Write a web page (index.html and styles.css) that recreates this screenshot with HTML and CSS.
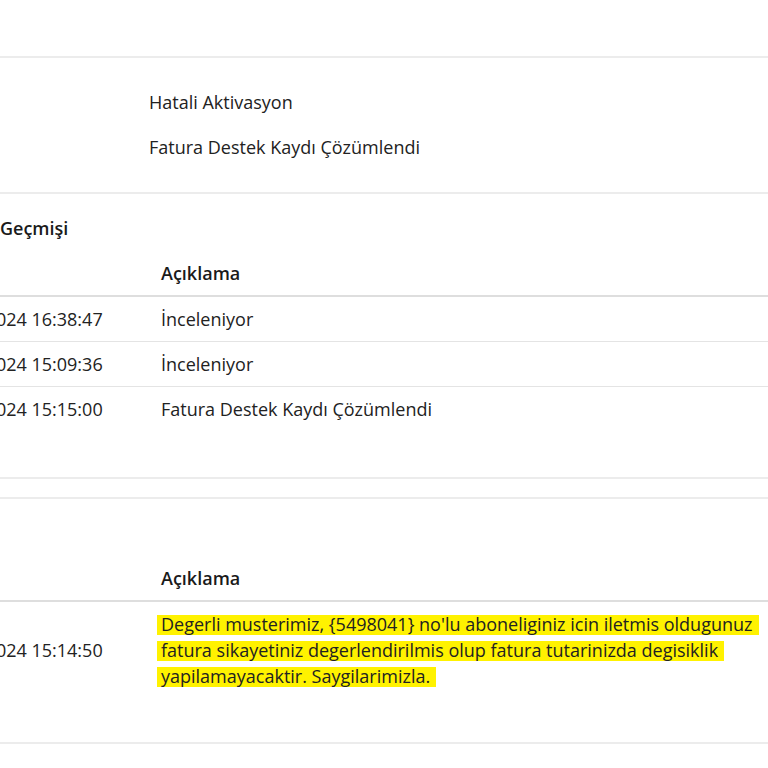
FILE: index.html
```html
<!DOCTYPE html>
<html lang="tr">
<head>
    <meta charset="UTF-8">
    <meta name="viewport" content="width=device-width, initial-scale=1.0">
    <title>Başvuru Detayı</title>
    <link rel="stylesheet" href="styles.css">
</head>
<body>

    <div class="page">
        <div class="panel">
            <div class="section info">
                <div class="info-row">
                    <span class="info-label">Konu</span>
                    <span class="info-value">Hatali Aktivasyon</span>
                </div>
                <div class="info-row">
                    <span class="info-label">Durum</span>
                    <span class="info-value">Fatura Destek Kaydı Çözümlendi</span>
                </div>
            </div>

            <div class="section history">
                <h2>Başvuru Geçmişi</h2>
                <table class="grid">
                    <colgroup><col class="col-date"><col></colgroup>
                    <thead>
                        <tr><th>Tarih</th><th>Açıklama</th></tr>
                    </thead>
                    <tbody>
                        <tr><td>12.03.2024 16:38:47</td><td>İnceleniyor</td></tr>
                        <tr><td>13.03.2024 15:09:36</td><td>İnceleniyor</td></tr>
                        <tr><td>14.03.2024 15:15:00</td><td>Fatura Destek Kaydı Çözümlendi</td></tr>
                    </tbody>
                </table>
            </div>
        </div>

        <div class="panel answer">
            <div class="section">
                <h2>Yanıt</h2>
                <table class="grid">
                    <colgroup><col class="col-date"><col></colgroup>
                    <thead>
                        <tr><th>Tarih</th><th>Açıklama</th></tr>
                    </thead>
                    <tbody>
                        <tr class="message-row">
                            <td>14.03.2024 15:14:50</td>
                            <td><span class="marker">Degerli musterimiz, {5498041} no'lu aboneliginiz icin iletmis oldugunuz fatura sikayetiniz degerlendirilmis olup fatura tutarinizda degisiklik yapilamayacaktir. Saygilarimizla.</span></td>
                        </tr>
                    </tbody>
                </table>
            </div>
        </div>
    </div>

</body>
</html>
```

FILE: styles.css
```css
html, body {
    margin: 0;
    background-color: white;
    overflow: hidden;
}
body {
    font-family: "Open Sans", Arial, sans-serif;
    font-size: 18px;
    color: #222;
}
.page {
    width: 900px;
    margin-left: -76px;
    padding-top: 56px;
}
.panel {
    border-top: 2px solid #ececec;
    border-bottom: 2px solid #ececec;
}
.panel.answer {
    margin-top: 18px;
}
.section {
    padding: 19px 0 0;
}
.section + .section {
    border-top: 2px solid #ececec;
}
.info {
    padding: 21px 0 23px;
}
.info-row {
    display: flex;
    height: 45px;
    align-items: center;
}
.info-label {
    width: 225px;
}
h2 {
    margin: 0 0 8px;
    font-size: 18px;
    line-height: 30px;
    font-weight: 600;
    color: #1a1a1a;
}
.grid {
    width: 100%;
    table-layout: fixed;
    border-collapse: collapse;
}
.grid .col-date {
    width: 237px;
}
.grid th {
    height: 44px;
    padding: 0;
    text-align: left;
    font-weight: 600;
    color: #1a1a1a;
    border-bottom: 2px solid #dedede;
}
.grid td {
    height: 44px;
    padding: 0 34px 0 0;
    border-bottom: 1px solid #e4e4e4;
}
.grid th:first-child,
.grid td:first-child {
    padding-left: 11px;
}
.grid tbody tr:last-child td {
    border-bottom: none;
}
.history {
    padding-bottom: 46px;
}
.answer .section {
    padding-bottom: 40px;
}
.message-row td {
    padding-top: 9px;
    padding-bottom: 13px;
    line-height: 26px;
}
.marker {
    background: linear-gradient(to bottom, transparent 14%, #fff200 14%, #fff200 94%, transparent 94%);
    -webkit-box-decoration-break: clone;
    box-decoration-break: clone;
    padding: 0 6px 0 4px;
    margin-left: -4px;
}
```
